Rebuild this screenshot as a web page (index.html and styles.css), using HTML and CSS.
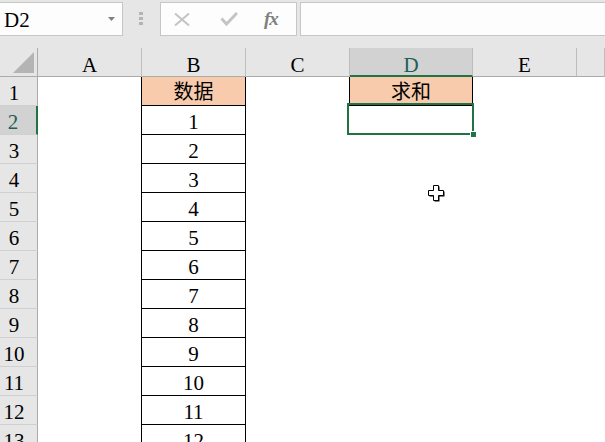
FILE: index.html
```html
<!DOCTYPE html>
<html>
<head>
<meta charset="utf-8">
<link rel="stylesheet" href="styles.css">
</head>
<body>
<div class="app">
  <div class="toolbar">
    <div class="namebox">
      <span class="ref">D2</span>
      <svg class="dd" width="7" height="4" viewBox="0 0 7 4"><polygon points="0,0 7,0 3.5,4" fill="#7f7f7f"/></svg>
    </div>
    <div class="grip"><i></i><i></i><i></i></div>
    <div class="fbox">
      <svg class="xbtn" width="18" height="13" viewBox="0 0 18 13"><path d="M2 0.5 L16 12.5 M16 0.5 L2 12.5" stroke="#c4c4c4" stroke-width="2" fill="none"/></svg>
      <svg class="okbtn" width="18" height="14" viewBox="0 0 18 14"><path d="M1.5 6.5 L6.5 12 L17 1" stroke="#c4c4c4" stroke-width="3" fill="none"/></svg>
      <span class="fx">fx</span>
    </div>
    <div class="finput"></div>
  </div>

  <div class="sheet">
    <div class="corner"><svg width="37" height="28" viewBox="0 0 37 28"><polygon points="34,4 34,25 13,25" fill="#b4b4b4"/></svg></div>
    <div class="ch">A</div><div class="ch">B</div><div class="ch">C</div><div class="ch sel">D</div><div class="ch">E</div><div class="ch"></div>

    <div class="rh">1</div><div class="c"></div><div class="c b peach cjk">数据</div><div class="c"></div><div class="c b peach cjk">求和</div><div class="c"></div><div class="c"></div>
    <div class="rh sel">2</div><div class="c"></div><div class="c b">1</div><div class="c"></div><div class="c"></div><div class="c"></div><div class="c"></div>
    <div class="rh">3</div><div class="c"></div><div class="c b">2</div><div class="c"></div><div class="c"></div><div class="c"></div><div class="c"></div>
    <div class="rh">4</div><div class="c"></div><div class="c b">3</div><div class="c"></div><div class="c"></div><div class="c"></div><div class="c"></div>
    <div class="rh">5</div><div class="c"></div><div class="c b">4</div><div class="c"></div><div class="c"></div><div class="c"></div><div class="c"></div>
    <div class="rh">6</div><div class="c"></div><div class="c b">5</div><div class="c"></div><div class="c"></div><div class="c"></div><div class="c"></div>
    <div class="rh">7</div><div class="c"></div><div class="c b">6</div><div class="c"></div><div class="c"></div><div class="c"></div><div class="c"></div>
    <div class="rh">8</div><div class="c"></div><div class="c b">7</div><div class="c"></div><div class="c"></div><div class="c"></div><div class="c"></div>
    <div class="rh">9</div><div class="c"></div><div class="c b">8</div><div class="c"></div><div class="c"></div><div class="c"></div><div class="c"></div>
    <div class="rh">10</div><div class="c"></div><div class="c b">9</div><div class="c"></div><div class="c"></div><div class="c"></div><div class="c"></div>
    <div class="rh">11</div><div class="c"></div><div class="c b">10</div><div class="c"></div><div class="c"></div><div class="c"></div><div class="c"></div>
    <div class="rh">12</div><div class="c"></div><div class="c b">11</div><div class="c"></div><div class="c"></div><div class="c"></div><div class="c"></div>
    <div class="rh">13</div><div class="c"></div><div class="c b">12</div><div class="c"></div><div class="c"></div><div class="c"></div><div class="c"></div>

    <div class="selection"></div>
    <div class="handle"></div>
    <svg class="cursor" width="17" height="17" viewBox="0 0 17 17">
      <polygon points="6.5,1.5 11.5,1.5 11.5,6.5 16.5,6.5 16.5,11.5 11.5,11.5 11.5,16.5 6.5,16.5 6.5,11.5 1.5,11.5 1.5,6.5 6.5,6.5" fill="#000"/>
      <polygon points="5.5,0.5 10.5,0.5 10.5,5.5 15.5,5.5 15.5,10.5 10.5,10.5 10.5,15.5 5.5,15.5 5.5,10.5 0.5,10.5 0.5,5.5 5.5,5.5" fill="#fff" stroke="#000" stroke-width="1"/>
    </svg>
  </div>
</div>
</body>
</html>
```

FILE: styles.css
```css
* { box-sizing: border-box; }
html, body { margin: 0; padding: 0; }
body {
  width: 605px;
  height: 442px;
  overflow: hidden;
  background: #ffffff;
  font-family: "Liberation Serif", "Noto Sans CJK SC", serif;
  font-size: 21px;
  color: #000;
}
.app { width: 605px; height: 442px; overflow: hidden; }

.toolbar {
  height: 48px;
  background: #e6e6e6;
  display: flex;
  align-items: flex-start;
  padding-top: 2px;
}
.namebox {
  width: 124px;
  height: 34px;
  margin-left: -1px;
  border: 1px solid #c6c6c6;
  background: #fdfdfd;
  display: flex;
  align-items: flex-start;
}
.ref {
  flex: 1;
  padding-left: 4px;
  padding-top: 5px;
  font-family: "Liberation Serif", serif;
  font-size: 21px;
  line-height: 24px;
  color: #000;
}
.dd { margin-top: 14px; margin-right: 7px; }
.grip {
  width: 37px;
  padding-left: 16px;
  padding-top: 10px;
  display: flex;
  flex-direction: column;
  gap: 2px;
}
.grip i { display: block; width: 4px; height: 3px; background: #b4b4b4; }
.fbox {
  width: 137px;
  height: 34px;
  border: 1px solid #c6c6c6;
  background: #fdfdfd;
  display: flex;
  align-items: flex-start;
}
.xbtn { margin-left: 12px; margin-top: 10px; }
.okbtn { margin-left: 29px; margin-top: 9px; }
.fx {
  margin-left: 26px;
  margin-top: 4px;
  font-family: "Liberation Serif", serif;
  font-style: italic;
  font-weight: bold;
  font-size: 19px;
  line-height: 24px;
  color: #808080;
  letter-spacing: -1px;
}
.finput {
  flex: 1;
  height: 34px;
  margin-left: 3px;
  margin-right: -1px;
  border: 1px solid #c6c6c6;
  background: #fdfdfd;
}

.sheet {
  position: relative;
  display: grid;
  grid-template-columns: 38px 104px 104px 104px 123px 104px 1fr;
  grid-auto-rows: 29px;
}
.corner {
  background: #e6e6e6;
  border-right: 1px solid #ababab;
  border-bottom: 1px solid #ababab;
}
.corner svg { display: block; }
.ch {
  background: #e6e6e6;
  border-right: 1px solid #bdbdbd;
  border-bottom: 1px solid #ababab;
  text-align: center;
  padding-top: 5px;
  line-height: 24px;
}
.ch.sel {
  background: #d2d2d2;
  border-bottom: 2px solid #217346;
  color: #1d5f56;
}
.rh {
  background: #e6e6e6;
  border-right: 1px solid #ababab;
  border-bottom: 1px solid #d0d0d0;
  text-align: center;
  padding-right: 9px;
  padding-top: 4px;
  line-height: 24px;
}
.rh.sel {
  background: #d2d2d2;
  border-right: 2px solid #217346;
  padding-right: 10px;
  color: #1d5f56;
}
.c {
  background: #ffffff;
  text-align: center;
  padding-top: 4px;
  line-height: 24px;
}
.b {
  border-right: 1px solid #000;
  border-bottom: 1px solid #000;
  box-shadow: -1px 0 0 #000;
}
.peach { background: #f8cbad; }
.cjk {
  font-family: "Noto Sans CJK SC", sans-serif;
  font-size: 20px;
  padding-top: 2px;
  line-height: 24px;
}

.selection {
  position: absolute;
  left: 347px;
  top: 55px;
  width: 127px;
  height: 32px;
  border: 2px solid #217346;
}
.handle {
  position: absolute;
  left: 470px;
  top: 83px;
  width: 7px;
  height: 7px;
  background: #217346;
  border: 1px solid #ffffff;
}
.cursor {
  position: absolute;
  left: 428px;
  top: 137px;
}
```
